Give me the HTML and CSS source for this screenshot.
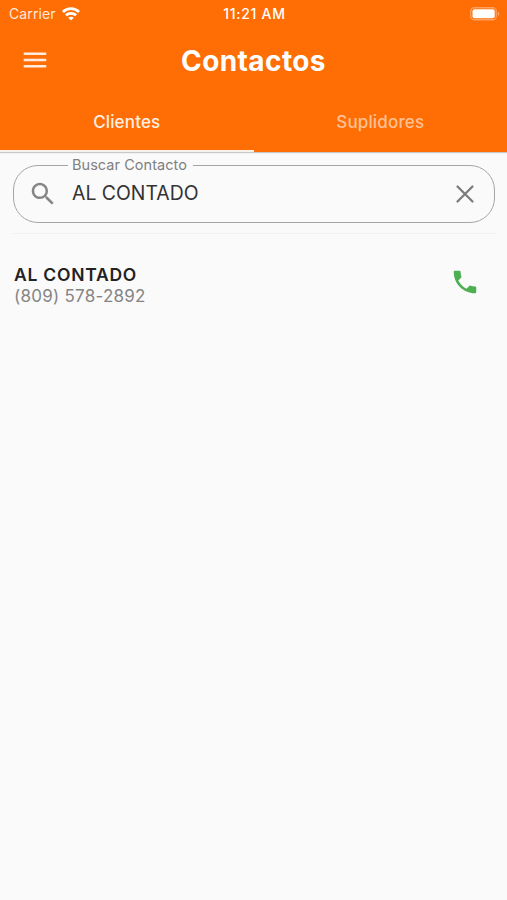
FILE: index.html
```html
<!DOCTYPE html>
<html lang="es">
<head>
    <meta charset="UTF-8">
    <meta name="viewport" content="width=device-width, initial-scale=1.0">
    <title>Contactos</title>
    <link rel="stylesheet" href="styles.css">
</head>
<body>
    <header class="header">
        <div class="status-bar">
            <div class="carrier">
                <span>Carrier</span>
                <svg class="wifi" viewBox="0 0 18 14" fill="none" stroke="#fff" stroke-width="2.7">
                    <path d="M.9 4.900C5.500.5 12.500.5 17.100 4.900"/>
                    <path d="M3.900 8.300c2.900-2.700 7.300-2.700 10.200 0"/>
                    <path d="M6.200 10.700c1.700-1.400 3.900-1.400 5.600 0L9 13.600z" fill="#fff" stroke="none"/>
                </svg>
            </div>
            <span class="time">11:21 AM</span>
            <svg class="battery" viewBox="0 0 30 14">
                <rect x=".75" y=".75" width="25.500" height="12" rx="3.500" fill="none" stroke="#fff" stroke-opacity=".35" stroke-width="1.300"/>
                <rect x="2.500" y="2.300" width="22.200" height="8.900" rx="2" fill="#fff"/>
                <path d="M27.800 4.700c2.200 1 2.200 3.200 0 4.200z" fill="#fff" fill-opacity=".4"/>
            </svg>
        </div>
        <div class="app-bar">
            <svg class="icon" viewBox="0 0 24 24" fill="#ffeee0"><path d="M3 18h18v-2H3v2zm0-5h18v-2H3v2zm0-7v2h18V6H3z"/></svg>
            <h1 class="title">Contactos</h1>
        </div>
        <nav class="tabs">
            <a class="tab active">Clientes</a>
            <a class="tab">Suplidores</a>
        </nav>
    </header>

    <main class="content">
        <fieldset class="search">
            <legend>Buscar Contacto</legend>
            <div class="search-row">
                <svg class="icon" viewBox="0 0 24 24" fill="#858585"><path d="M15.500 14h-.79l-.28-.27C15.410 12.590 16 11.110 16 9.500 16 5.910 13.090 3 9.500 3S3 5.910 3 9.500 5.910 16 9.500 16c1.610 0 3.090-.59 4.230-1.570l.27.28v.79l5 4.990L20.490 19l-4.990-5zm-6 0C7.010 14 5 11.990 5 9.500S7.010 5 9.500 5 14 7.010 14 9.500 11.990 14 9.500 14z"/></svg>
                <span class="search-value">AL CONTADO</span>
                <svg class="icon" viewBox="0 0 24 24" fill="none" stroke="#7b7b7b" stroke-width="1.800" stroke-linecap="round"><path d="M6 6l12 12M18 6L6 18"/></svg>
            </div>
        </fieldset>
        <div class="divider"></div>
        <div class="contact">
            <div class="contact-info">
                <div class="contact-name">AL CONTADO</div>
                <div class="contact-phone">(809) 578-2892</div>
            </div>
            <svg class="icon" viewBox="0 0 24 24" fill="#4caf50"><path d="M6.620 10.790c1.440 2.830 3.760 5.140 6.590 6.590l2.200-2.200c.27-.27.67-.36 1.020-.24 1.120.37 2.330.57 3.570.57.55 0 1 .45 1 1V20c0 .55-.45 1-1 1-9.390 0-17-7.610-17-17 0-.55.45-1 1-1h3.500c.55 0 1 .45 1 1 0 1.250.2 2.450.57 3.570.11.35.03.74-.25 1.020l-2.200 2.200z"/></svg>
        </div>
    </main>
</body>
</html>
```
FILE: styles.css
```css
* {
    box-sizing: border-box;
}

body {
    margin: 0;
    min-height: 100vh;
    background-color: #fafafa;
    font-family: Inter, "Liberation Sans", sans-serif;
    color: #222;
}

.header {
    height: 152px;
    background-color: #ff6d05;
    color: white;
    box-shadow: 0 1px 1px rgba(0, 0, 0, 0.2);
}

.status-bar {
    display: grid;
    grid-template-columns: 1fr auto 1fr;
    align-items: center;
    height: 26px;
    padding: 1px 7px 0 9px;
    font-size: 14px;
}

.carrier {
    display: flex;
    align-items: center;
    gap: 6px;
    color: #ffe9d9;
    letter-spacing: 0.1px;
}

.wifi {
    width: 18px;
    height: 14px;
}

.time {
    font-weight: 500;
    letter-spacing: 0.7px;
}

.battery {
    justify-self: end;
    width: 30px;
    height: 14px;
}

.icon {
    flex: none;
    width: 30px;
    height: 30px;
}

.app-bar {
    display: grid;
    grid-template-columns: 30px 1fr 30px;
    align-items: center;
    height: 68px;
    padding: 0 20px;
}

.title {
    margin: 0;
    padding-top: 1px;
    font-size: 28px;
    font-weight: 700;
    letter-spacing: 0.4px;
    text-align: center;
}

.tabs {
    display: flex;
    height: 58px;
}

.tab {
    flex: 1;
    border-bottom: 2px solid transparent;
    padding-top: 2px;
    font-size: 17px;
    font-weight: 500;
    line-height: 53px;
    letter-spacing: 0.15px;
    text-align: center;
    color: #ffc194;
}

.tab.active {
    border-bottom-color: #f8f2ed;
    color: #fff0e2;
}

.content {
    padding: 4px 12px 0 13px;
}

.search {
    height: 67px;
    margin: 0;
    border: 1.500px solid #a5a5a5;
    border-radius: 25px;
    padding: 0 14px;
}

.search legend {
    margin-left: 40px;
    padding: 0 6px 0 4px;
    font-size: 14.500px;
    line-height: 18px;
    letter-spacing: 0.05px;
    color: #808080;
}

.search-row {
    display: flex;
    align-items: center;
    height: 40px;
}

.search-value {
    flex: 1;
    margin-left: 14px;
    padding-bottom: 2px;
    font-size: 19.400px;
    color: #333;
}

.divider {
    height: 1px;
    margin-top: 10px;
    background-color: #f0f0f0;
}

.contact {
    display: flex;
    align-items: flex-start;
    justify-content: space-between;
    margin-top: 33px;
    padding-right: 15px;
}

.contact-info {
    margin-top: -3px;
    padding-left: 1px;
}

.contact-name {
    font-size: 17.500px;
    font-weight: 600;
    line-height: 21px;
    letter-spacing: 0.75px;
}

.contact-phone {
    margin-top: 1px;
    font-size: 17px;
    line-height: 21px;
    letter-spacing: 0.25px;
    color: #858585;
}
```
